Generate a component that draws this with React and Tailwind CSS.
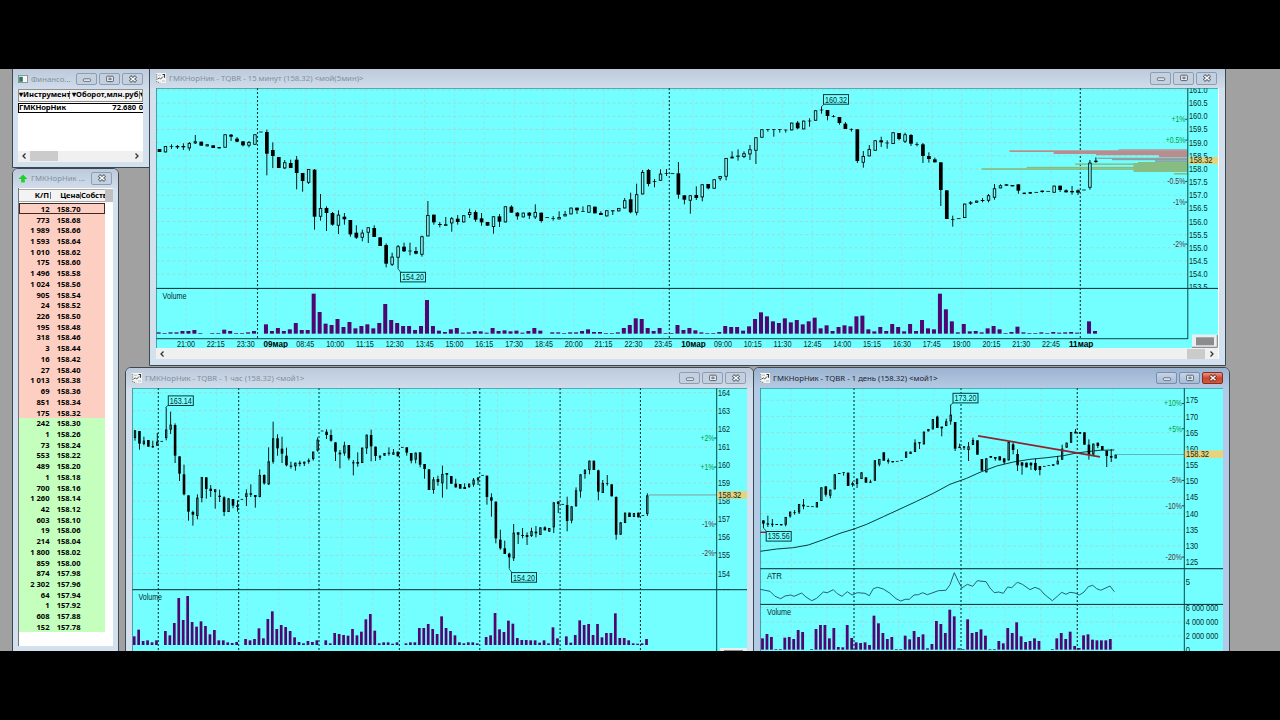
import { Fragment } from 'react';

const ASKS = [
    ['12', '158.70'], ['773', '158.68'], ['1 989', '158.66'], ['1 593', '158.64'], ['1 010', '158.62'],
    ['175', '158.60'], ['1 496', '158.58'], ['1 024', '158.56'], ['905', '158.54'], ['24', '158.52'],
    ['226', '158.50'], ['195', '158.48'], ['318', '158.46'], ['3', '158.44'], ['16', '158.42'],
    ['27', '158.40'], ['1 013', '158.38'], ['69', '158.36'], ['851', '158.34'], ['175', '158.32'],
];
const BIDS = [
    ['242', '158.30'], ['1', '158.26'], ['73', '158.24'], ['553', '158.22'], ['489', '158.20'],
    ['1', '158.18'], ['700', '158.16'], ['1 260', '158.14'], ['42', '158.12'], ['603', '158.10'],
    ['19', '158.06'], ['214', '158.04'], ['1 800', '158.02'], ['859', '158.00'], ['874', '157.98'],
    ['2 302', '157.96'], ['64', '157.94'], ['1', '157.92'], ['608', '157.88'], ['152', '157.78'],
];

// Candles: f = filled, h = hollow, d = flat dash. Numbers are top,bottom[,high,low]
// in thirds of a pixel below the chart's base line.
const M15_CANDLES = `
f249,258 h240,259 f241,243,235,249 f240,244,237,249 f240,244,232,252 h231,247,228,254 h226,232,207,234 f227,239 h235,241 f238,246
h243,247 h205,245 f206,212,204,225 f218,227,213,229 f226,238,226,241 h228,239,225,244 h205,236 d198 f198,263,191,328 f252,270,229,306
f273,306 h289,307,282,309 f291,306,281,306 f281,321,270,370 f321,345,321,377 h309,350,309,354 f311,452,309,491 h426,452,384,464 f426,441,421,495 f441,476,438,479
h446,479,433,504 f452,460,441,476 f462,505,462,512 f500,515,478,519 h500,515,491,526 h484,500,484,531 f486,513,478,513 f514,540 f537,593,532,604 h572,596,560,600
h541,575,537,608 f542,556,530,558 f554,556,530,568 f555,563,543,565 h511,566,509,572 h447,511,405,511 f446,469,446,476 f474,477,468,484 h475,479,453,479 h457,472,453,497
f458,468,447,476 h448,469 h438,447,428,456 f438,461,433,467 f457,469,441,479 f468,479 h451,483,451,503 f451,467,444,483 h421,469 f422,440,418,440
f440,451,438,461 h440,454 f440,449,438,459 h438,454,415,459 f440,465,440,470 d455 f456,458,450,464 h453,460,436,460 h444,451,435,451 h425,445
f425,433,425,444 f435,437,421,438 h418,440 f422,442 f441,447,436,447 h433,451 f433,436,433,447 h426,436 h403,427,396,427 f400,439,380,442
h385,440,353,448 h318,385,312,385 f312,354,309,361 f346,348,339,364 h323,344,310,344 f322,324,309,330 d323 f322,386,288,398 f388,401,388,415 h388,404,388,443
f387,396,361,402 h355,394,355,406 f354,367,354,370 h340,368 h330,338,330,344 h276,332,276,343 h272,277,256,277 f269,272,250,284 h262,273,256,276 h250,265,237,282
h214,254,214,294 h190,215 f189,191,189,197 f189,191,189,212 f189,191,189,200 f191,193,191,200 h170,193 f170,187,165,190 h164,190 f164,166,157,182
h133,164 f131,133,122,143 f132,150,132,163 f150,152,147,154 f153,171,153,176 f173,189,168,189 f189,191,187,197 f190,285,190,291 h270,290,255,305 h249,271,237,271
h223,254 f223,229,212,243 f230,232,223,248 h199,234 f201,219,201,223 h205,227,200,231 f207,233,204,240 f234,236,229,241 f235,270,231,291 f270,279,259,290
f280,289,275,289 f289,372,289,420 f373,459 f459,461,449,482 d458 h413,456 f409,413,405,417 h404,410 f402,405,396,409 h388,404,384,409
h367,395,354,401 h358,367,355,367 f355,359 f357,361 f355,374,355,383 h380,383 h378,383 d379 f374,378,373,380 d376
h359,380 f359,372,359,378 f373,379,370,379 f375,379,360,386 f373,380,370,387 d372 h290,365,282,371 h284,288,274,290`;

const M15_VOLUME = `
799 801 799 799 795 795 792 801 - 801 801 791 795 801 801 799 795 - 775 795 786 795 790 771 792 792 683 738 773 777
759 783 768 787 780 775 787 771 714 762 771 780 780 792 780 702 780 794 798 790 786 800 799 795 796 800 786 795 793 796
794 800 795 786 794 - 799 799 801 799 799 795 790 798 798 801 801 799 786 777 757 759 786 795 786 801 801 777 792 786
793 799 801 801 798 780 783 783 794 781 759 739 751 766 771 757 769 762 775 766 755 787 778 795 783 778 781 751 749 790
796 783 795 774 783 796 774 795 762 787 790 683 730 766 799 774 796 795 799 787 780 790 801 798 782 799 801 801 799 801
798 800 799 798 800 - 766 795`;

const H1_CANDLES = `
h199,222,199,230 f201,239,201,257 h230,240,218,244 f228,248 h246,249,230,251 h233,245,207,245 d232 h197,222,130,229 h182,197,143,210 f183,275,178,297
f277,329,277,351 f331,391,302,394 f394,443,394,470 f444,452,440,485 h401,456,391,466 h339,402,339,415 f340,375,340,404 f374,381,363,399 h376,384,376,434 f395,399,377,414
f400,444,397,456 h403,444 f405,425,405,433 h424,429,409,443 d406 h388,399,376,426 f388,392,361,399 f393,399,393,431 h333,399,316,400 f333,358,331,362
h292,361,250,363 h223,293,173,299 f223,253,211,275 f254,269,218,297 f275,304,251,307 f305,308,293,314 h296,307,296,320 f296,300,290,307 h293,299,293,306 f289,293,283,299
h263,285,263,290 h227,260,220,263 d201 f203,213,196,225 f213,230,197,233 f235,263,235,291 f266,271,258,313 h244,268,233,275 f243,283,243,289 f295,298,288,334
f294,299,265,308 h251,297 h212,253,212,270 f213,247,197,292 f248,276,248,291 h275,281,275,288 h267,275 f266,269,250,275 h265,272,255,272 f263,277
d250 f250,266,250,275 f267,290,267,298 h266,287,266,298 f265,302,265,310 f300,315,300,344 f316,378 h346,378,339,389 f345,354,335,365 h330,358,305,401
f327,332,327,376 f336,359 f359,370,344,371 f360,374 f369,375,358,375 h359,369,359,372 h347,362,342,368 h341,349,339,363 d334 f335,399,335,422
f400,410,388,458 f413,523,413,538 f527,553,497,557 f553,570,530,570 f569,580,566,614 h506,583,480,591 f505,512,505,540 f513,516,492,523 f513,519,505,543 h501,516,491,519
f503,508,486,520 h490,513 f490,499,487,499 h492,503 h415,490,415,507 f413,420,411,447 d421 f423,471,398,502 h427,470,427,478 h379,427,370,427
h331,382,331,401 h317,330,317,344 h290,318,290,331 f290,318 f319,383,317,409 h357,387,348,387 f357,359,333,365 f361,397 f399,512,397,527 h475,512
h446,477 f446,459 h447,459 f446,460 d455 h394,450,388,456`;

const H1_VOLUME = `
817 797 831 829 835 829 - 801 814 777 702 768 696 774 788 772 786 811 798 829 829 835 837 834 - 825 829 825 793 823
765 742 795 783 789 801 820 834 838 831 834 829 - 829 838 807 810 813 815 795 814 803 766 750 800 838 835 835 839 835
- 838 835 835 792 792 780 795 810 757 792 801 814 835 838 835 835 838 - 819 814 747 796 804 770 779 822 828 828 829
829 836 829 838 790 823 - 817 836 813 769 783 780 813 780 820 807 807 748 822 822 829 838 839 838 825`;

const D1_CANDLES = `
f469,479,469,492 f478,482,455,489 h479,482,465,489 f480,483 f480,484 h459,482,459,487 h443,457,443,461 f445,447,438,452 h420,445,420,450 f422,427,405,436
d427 d428 h414,430 h370,411 f367,392,367,398 h377,395,377,403 h331,376 f327,330 f325,327,325,335 f326,366
h357,363,353,368 h344,360,344,372 h325,345 f340,356 f353,356,347,356 h289,350 h285,302,285,307 f265,290 h288,293,283,299 f291,295
d292 d290 h263,281 h263,270 h236,264,226,264 h234,236,234,255 h203,241 h195,202 h165,196 f158,192,155,192
f188,193,188,217 h172,186,164,186 h152,172,122,182 f174,254,174,261 f248,252,239,252 h247,251,247,258 h247,258,234,291 h228,243,221,243 f229,272 f285,320
h283,325 f276,281 f279,284,279,290 f277,289 f283,295,283,300 h234,289 f241,258,236,271 f270,304,256,321 f295,305,295,332 f296,310
f296,304,296,318 f297,318,284,321 f306,318,306,334 d307 d305 f301,305 h290,301,276,301 h254,287,242,287 h236,251 h204,236
f203,208,195,208 h204,209 f205,242 f242,272,226,287 h239,272 f236,246,236,252 f246,258 f260,276,260,309 f276,281,255,294 h272,283`;

const D1_VOLUME = `
823 810 819 855 855 821 819 825 798 804 - 855 795 783 783 823 792 849 850 783 822 835 837 835 843 755 778 807 825 819
855 855 815 826 801 819 811 853 840 771 780 807 737 757 853 855 766 807 804 796 815 855 855 831 838 792 807 775 817 834
831 823 831 - - 855 823 807 825 803 846 852 814 811 827 829 829 829 825`;

const MA_POINTS = '760.3,551.3 776.7,549 793.3,547.7 808.3,545 823.3,539.7 840,533.3 854,529 866.7,524.3 883.3,516.7 900,509 916.7,501.3 933.3,493.3 950,484.3 966.7,478.3 980,472.3 996.7,466 1013.3,462 1030,459.3 1046.7,457.7 1063.3,455.7 1076.7,453 1090,451.3 1100,450.3 1114.3,450';
const ATR_POINTS = '760,589.3 770,591.3 775,596.3 780.7,598.7 785,596 790.7,595 794,596.3 801.7,593 806,597 811.7,600.7 816.7,598.3 823.3,592 827.3,592.7 833.3,589.7 837.3,593.7 842,596.3 847.3,591.7 852,595 857.3,592.7 865,593.3 869.3,595.7 873.3,588.7 877.7,587.3 883.3,589 890,593.3 896,598.7 900.7,601 905.3,599.3 909.3,599.3 914,595 918.3,594.7 922.7,592.7 927.3,594.7 932,593 938.3,590.7 946,590.3 950,584.7 954.3,572.7 958.3,581.3 962,588 967.3,584.3 972.7,586.3 977.3,580.7 986,581.7 990,588 994.3,592.7 998.7,592 1003.3,593.3 1007.7,587 1011.7,587.7 1017.3,582.3 1022.3,584.3 1030,589.7 1035,587.3 1040,589.3 1044,594 1052.3,600.7 1057.3,596.3 1061.7,592.3 1066,594.3 1070,592.3 1075,593 1079.3,595 1084,592 1088.3,586.7 1092.7,585.3 1096.7,588.7 1100.7,590.3 1110,586 1114.3,591.7';

// order book profile: x start, y, height
const RED_DEPTH = [[1118.5, 149.3, 1.2], [1009.5, 150.3, 1.7], [1053.7, 152, 2], [1096, 154, 1.2], [1159, 155, 2.3]];
const GRAY_DEPTH = [[1097.5, 157.7, 1.2], [1112, 159, 1.2], [1155, 160.3, 1.6]];
const GREEN_DEPTH = [[1138, 162, 1.4], [1133.5, 163, 9], [1075, 163.4, 1.5], [1026.7, 166.8, 1.3], [981.7, 168.2, 1.7], [1174, 173, 1.6]];

const range = (n) => Array.from({ length: n }, (_, i) => i);

function Candles({ data, x0, step, base, width, fill = '#73ffff' }) {
    return data.trim().split(/\s+/).map((token, i) => {
        const kind = token[0];
        const [top, bottom = top, high = top, low = bottom] = token.slice(1).split(',').map(Number);
        const x = x0 + i * step;
        const y = (v) => base + v / 3;
        if (kind === 'd') {
            return <rect key={i} x={x - width / 2} y={y(top) - 0.4} width={width} height={0.8} fill="#000" />;
        }
        return (
            <Fragment key={i}>
                <rect x={x - 0.45} y={y(high)} width={0.9} height={(low - high) / 3} fill="#000" />
                {kind === 'h' ? (
                    <rect x={x - width / 2 + 0.6} y={y(top) + 0.4} width={width - 1.2} height={Math.max((bottom - top) / 3 - 0.8, 0.6)}
                        fill={fill} stroke="#000" strokeWidth={0.85} />
                ) : (
                    <rect x={x - width / 2} y={y(top)} width={width} height={(bottom - top) / 3} fill="#000" />
                )}
            </Fragment>
        );
    });
}

function Volume({ data, x0, step, base, floor, width }) {
    return data.trim().split(/\s+/).map((v, i) => v !== '-' && (
        <rect key={i} x={x0 + i * step - width / 2} y={base + v / 3} width={width} height={(floor - v) / 3} fill="#4e0672" />
    ));
}

function Label({ x, y, w, children, color = '#0a2a2a', anchor = 'start', bold }) {
    return (
        <text x={x} y={y + 3} textLength={w} lengthAdjust="spacingAndGlyphs" textAnchor={anchor} fill={color}
            fontSize="8.8" fontWeight={bold ? 700 : 400}>{children}</text>
    );
}

function Tag({ x, y, children }) {
    return (
        <>
            <rect x={x} y={y} width={25} height={9.6} fill="#73ffff" stroke="#063b3b" strokeWidth="1" />
            <Label x={x + 1.5} y={y + 4.9} w={22}>{children}</Label>
        </>
    );
}

function HGrid({ x1, x2, ys }) {
    return ys.map((y) => <line key={y} x1={x1} x2={x2} y1={y} y2={y} stroke="#9fd6d6" strokeWidth="0.9" strokeDasharray="3 2.5" />);
}

function VGrid({ y1, y2, xs }) {
    return xs.map((x) => <line key={x} x1={x} x2={x} y1={y1} y2={y2} stroke="#9be0e0" strokeWidth="0.9" strokeDasharray="3 2.5" />);
}

function DayLines({ y1, y2, xs }) {
    return xs.map((x) => <line key={x} x1={x} x2={x} y1={y1} y2={y2} stroke="#03393b" strokeWidth="1.1" strokeDasharray="2 2" />);
}

function Percents({ x, items }) {
    return items.map(([text, y]) => (
        <Fragment key={text}>
            <Label x={x} y={y} w={text.length * 4.1 + (text.includes('.') ? -1 : 1.5) - (text[0] === '-' ? 1.5 : 0)} anchor="end"
                color={text[0] === '+' ? '#00a040' : '#5b3038'}>{text}</Label>
            <rect x={x} y={y - 0.4} width="2" height="0.9" fill="#063b3b" />
        </Fragment>
    ));
}

const M15_TICKS = ['21:00', '22:15', '23:30', '09мар', '08:45', '10:00', '11:15', '12:30', '13:45', '15:00', '16:15', '17:30', '18:45',
    '20:00', '21:15', '22:30', '23:45', '10мар', '09:00', '10:15', '11:30', '12:45', '14:00', '15:15', '16:30', '17:45', '19:00', '20:15',
    '21:30', '22:45', '11мар'];

function Chart15() {
    return (
        <svg viewBox="156 88 1062 260" className="block h-[260px] w-[1062px] shrink-0 bg-[#73ffff] font-['Liberation_Sans',sans-serif]">
            <svg x="156" y="88" width="1062" height="200.3" viewBox="156 88 1062 200.3">
                <HGrid x1={156} x2={1187} ys={range(15).map((i) => 90 + i * 13.15)} />
                {range(16).map((i) => (
                    <Label key={i} x={1189} y={90 + i * 13.15} w={18.5}>{(161 - i * 0.5).toFixed(1)}</Label>
                ))}
            </svg>
            <VGrid y1={88} y2={338} xs={range(31).map((i) => 186 + i * 29.83)} />
            <DayLines y1={88} y2={338} xs={[257.5, 669.3, 1080.3]} />
            {RED_DEPTH.map(([x, y, h]) => <rect key={y} x={x} y={y} width={1187.5 - x} height={h} fill="#bb8c8e" />)}
            {GRAY_DEPTH.map(([x, y, h]) => <rect key={y} x={x} y={y} width={1187.5 - x} height={h} fill="#8f9c9c" />)}
            {GREEN_DEPTH.map(([x, y, h]) => <rect key={y} x={x} y={y} width={1187.5 - x} height={h} fill="#87bd83" />)}
            <Candles data={M15_CANDLES} x0={159.5} step={5.9643} base={66} width={3.7} />
            <Volume data={M15_VOLUME} x0={158.6} step={5.9643} base={66} floor={803} width={4} />
            <line x1="398" y1="268.7" x2="400.5" y2="272" stroke="#063b3b" strokeWidth="0.8" />
            <Tag x={400.5} y={272.3}>154.20</Tag>
            <line x1="821.3" y1="107" x2="824" y2="104" stroke="#063b3b" strokeWidth="0.8" />
            <Tag x={823.5} y={94.6}>160.32</Tag>
            <Label x={162.5} y={296.2} w={24}>Volume</Label>
            <Percents x={1185.3} items={[['+1%', 119.2], ['+0.5%', 140], ['-0.5%', 181.3], ['-1%', 202], ['-2%', 244]]} />
            <rect x="156" y="287.9" width="1062" height="1" fill="#022c30" />
            <rect x="156" y="338.2" width="1032" height="1" fill="#06484c" />
            <rect x="1187.3" y="88" width="1" height="251" fill="#06484c" />
            <rect x="1188.6" y="157" width="29.4" height="7.2" fill="#e6d37c" />
            <Label x={1189.5} y={160.4} w={23}>158.32</Label>
            {M15_TICKS.map((t, i) => {
                const day = t.includes('мар');
                return <Label key={t + i} x={186 + i * 29.83 + (day ? 0.3 : 0)} y={343.5} w={day ? 24.5 : 18} anchor="middle" bold={day} color={day ? '#000' : undefined}>{t}</Label>;
            })}
            <rect x="1192" y="334.5" width="26" height="13.5" fill="#e9eef0" />
            <path d="M1217.3 335v12.3H1192" fill="none" stroke="#777" />
            <rect x="1196" y="337.3" width="18" height="8" fill="#8c8c8c" />
            <path d="M156.3 348V88.2h1061.7" fill="none" stroke="#35686e" strokeWidth="0.8" />
        </svg>
    );
}

function Chart1h() {
    return (
        <svg viewBox="132 388 615 263" className="block h-[263px] w-[615px] shrink-0 bg-[#73ffff] font-['Liberation_Sans',sans-serif]">
            <svg x="132" y="388" width="615" height="201.7" viewBox="132 388 615 201.7">
                <HGrid x1={132} x2={716} ys={range(11).map((i) => 392.7 + i * 18.08)} />
                {range(12).map((i) => <Label key={i} x={718} y={392.7 + i * 18.08} w={12}>{164 - i}</Label>)}
            </svg>
            <VGrid y1={388} y2={651} xs={range(16).map((i) => 154 + i * 31.23)} />
            <DayLines y1={388} y2={651} xs={range(7).map((i) => 158.3 + i * 80.36)} />
            <rect x="649" y="494.5" width="68" height="0.9" fill="#8b8f91" />
            <Candles data={H1_CANDLES} x0={135} step={4.455} base={364} width={2.6} fill="#4aa9a9" />
            <Volume data={H1_VOLUME} x0={134.2} step={4.455} base={364} floor={843} width={2.7} />
            <line x1="165.5" y1="407.5" x2="168.5" y2="405" stroke="#063b3b" strokeWidth="0.8" />
            <Tag x={168.3} y={395.9}>163.14</Tag>
            <line x1="509.3" y1="569" x2="511.5" y2="572" stroke="#063b3b" strokeWidth="0.8" />
            <Tag x={511.5} y={572.6}>154.20</Tag>
            <Label x={138.5} y={597.3} w={23.5}>Volume</Label>
            <Percents x={714.3} items={[['+2%', 438], ['+1%', 467], ['-1%', 524], ['-2%', 552.8]]} />
            <rect x="132" y="589.2" width="615" height="1" fill="#022c30" />
            <rect x="716.2" y="388" width="1" height="263" fill="#06484c" />
            <rect x="717.3" y="491.2" width="29.7" height="7.6" fill="#e6d37c" />
            <Label x={718.3} y={495} w={23}>158.32</Label>
            <rect x="720" y="648" width="27" height="3" fill="#e9eef0" />
            <rect x="724" y="650" width="19" height="1" fill="#8c8c8c" />
            <path d="M132.3 651V388.2H747" fill="none" stroke="#35686e" strokeWidth="0.8" />
        </svg>
    );
}

function Chart1d() {
    return (
        <svg viewBox="760 388 463 263" className="block h-[263px] w-[463px] shrink-0 bg-[#73ffff] font-['Liberation_Sans',sans-serif]">
            <HGrid x1={760} x2={1184} ys={[...range(11).map((i) => 400.2 + i * 16.2), 582, 607.5, 622, 636]} />
            {range(11).map((i) => <Label key={i} x={1185.8} y={400.4 + i * 16.17} w={12.3}>{175 - i * 5}</Label>)}
            <Label x={1185.8} y={582.3} w={4.3}>5</Label>
            <Label x={1185.8} y={608} w={32.5}>6 000 000</Label>
            <Label x={1185.8} y={622} w={32.5}>4 000 000</Label>
            <Label x={1185.8} y={636.2} w={32.5}>2 000 000</Label>
            <Label x={1185.8} y={650} w={4.3}>0</Label>
            <VGrid y1={388} y2={651} xs={range(10).map((i) => 791.3 + i * 35.67)} />
            <DayLines y1={388} y2={651} xs={[854, 961, 1077.3]} />
            <rect x="1117" y="454" width="67" height="0.8" fill="#54a3ad" />
            <polyline points={MA_POINTS} fill="none" stroke="#053b40" strokeWidth="1" />
            <Candles data={D1_CANDLES} x0={763.4} step={4.459} base={364} width={2.6} fill="#4aa9a9" />
            <line x1="978" y1="435.8" x2="1100" y2="456.8" stroke="#8e2430" strokeWidth="1.7" />
            <line x1="760" y1="532.3" x2="771" y2="532.3" stroke="#b01030" strokeWidth="1.4" />
            <polyline points={ATR_POINTS} fill="none" stroke="#1c4f66" strokeWidth="0.9" />
            <Volume data={D1_VOLUME} x0={762.5} step={4.459} base={364} floor={857} width={2.8} />
            <line x1="950.3" y1="405.5" x2="953.3" y2="402.5" stroke="#063b3b" strokeWidth="0.8" />
            <Tag x={953} y={393.3}>173.20</Tag>
            <line x1="763.5" y1="528" x2="766.5" y2="531.5" stroke="#063b3b" strokeWidth="0.8" />
            <Tag x={766.2} y={531.5}>135.56</Tag>
            <Label x={767} y={576.3} w={15}>ATR</Label>
            <Label x={767} y={612} w={24}>Volume</Label>
            <Percents x={1182} items={[['+10%', 403.4], ['+5%', 428.7], ['-5%', 480.3], ['-10%', 505.8], ['-20%', 557]]} />
            <rect x="760" y="568.2" width="463" height="1" fill="#022c30" />
            <rect x="760" y="603.9" width="463" height="1" fill="#022c30" />
            <rect x="1183.8" y="388" width="1" height="263" fill="#06484c" />
            <rect x="1184.8" y="450.4" width="38.2" height="7.6" fill="#e6d37c" />
            <Label x={1186} y={454.3} w={23}>158.32</Label>
            <path d="M760.3 651V388.2H1223" fill="none" stroke="#35686e" strokeWidth="0.8" />
        </svg>
    );
}

function CaptionButton({ type, active }) {
    const red = active && type === 'close';
    return (
        <div className={`flex h-[12.5px] w-[21px] items-center justify-center rounded-[2px] border ${red ? 'border-[#8a2a20] bg-linear-to-b from-[#e39a88] via-[#c9452c] to-[#cf5c3c]' : active ? 'border-[#7b8ea9] bg-linear-to-b from-[#c4d4e8] to-[#a6bcd8]' : 'border-[#8f9db0] bg-[#c3d0df]'}`}>
            <svg viewBox="0 0 12 8" className="h-2 w-3">
                {type === 'min' && <rect x="2.4" y="3.9" width="7.2" height="2.4" rx="0.6" fill="#fff" stroke="#56606e" strokeWidth="0.9" />}
                {type === 'max' && (
                    <>
                        <rect x="2.7" y="1.2" width="6.6" height="5.4" rx="0.6" fill="#fff" stroke="#56606e" strokeWidth="1" />
                        <rect x="4.9" y="3" width="2.2" height="1.8" fill="#c3d0df" stroke="#56606e" strokeWidth="0.8" />
                    </>
                )}
                {type === 'close' && (
                    <>
                        <path d="M3 1.3 L9 6.7 M9 1.3 L3 6.7" stroke={red ? '#7b2a20' : '#56606e'} strokeWidth="3.2" />
                        <path d="M3.5 1.8 L8.5 6.2 M8.5 1.8 L3.5 6.2" stroke="#fff" strokeWidth="1.5" />
                    </>
                )}
            </svg>
        </div>
    );
}

function ChartIcon() {
    return (
        <svg viewBox="0 0 10 10" className="h-2.5 w-2.5">
            <rect width="10" height="10" fill="#f4f6f5" />
            <path d="M0.7 1v8.3h3.5" fill="none" stroke="#777d7a" strokeDasharray="1.5 0.8" />
            <path d="M1.5 6l2-1 1.2 1L7 3.5" fill="none" stroke="#4d5250" />
            <path d="M6.5 1.5h2v3.2" fill="none" stroke="#333" strokeWidth="1.1" />
            <path d="M2 2.2h3M6 8h3" stroke="#b5bab8" />
        </svg>
    );
}

function TableIcon() {
    return (
        <svg viewBox="0 0 10 8" className="h-2 w-2.5">
            <rect x="0.4" y="0.4" width="9.2" height="7.2" fill="#f5faf8" stroke="#75867f" strokeWidth="0.8" />
            <rect x="1.2" y="1.8" width="3.6" height="5" fill="#28786a" />
        </svg>
    );
}

function UpIcon() {
    return (
        <svg viewBox="0 0 10 9" className="h-[9px] w-2.5">
            <path d="M5 0.5 L9.5 5 H6.8 V8.5 H3.2 V5 H0.5z" fill="#1fd12b" />
        </svg>
    );
}

function Window({ title, icon, place, bar = 'pr-[7px]', buttons = ['min', 'max', 'close'], active, children }) {
    return (
        <div className={`absolute flex flex-col overflow-hidden rounded-t-[6px] border border-[#3d4752] px-[5px] ${active ? 'bg-[#b3cae6]' : 'bg-[#d3e0ed]'} ${place}`}>
            <div className={`-mx-[6px] flex h-[19.5px] shrink-0 items-center pl-1.5 ${bar} ${active ? 'bg-linear-to-b from-[#9cb3d0] to-[#b4cae4]' : 'bg-linear-to-b from-[#bccadb] to-[#d0dcea]'}`}>
                {icon}
                <span className={`mt-[2px] ml-[3px] flex-1 overflow-hidden text-[7.75px] whitespace-nowrap font-['Noto_Sans',sans-serif] ${active ? 'text-[#1d2530]' : 'text-[#83909d]'}`}>{title}</span>
                <div className="flex gap-[2px]">
                    {buttons.map((type) => <CaptionButton key={type} type={type} active={active} />)}
                </div>
            </div>
            {children}
        </div>
    );
}

function Arrow({ dir }) {
    return (
        <svg viewBox="0 0 6 8" className="h-2 w-1.5">
            <path d={dir === 'left' ? 'M4.5 1.5L2 4l2.5 2.5' : 'M1.5 1.5L4 4 1.5 6.5'} fill="none" stroke="#333" strokeWidth="1.3" />
        </svg>
    );
}

function BookRow({ qty, price, tone }) {
    return (
        <div className={`flex h-[10.73px] w-[86px] items-center pt-[2px] leading-none ${tone}`}>
            <span className="w-[30.5px] text-right">{qty}</span>
            <span className="w-[31px] text-right">{price}</span>
        </div>
    );
}

export default function App() {
    return (
        <div className="h-[720px] w-[1280px] overflow-hidden bg-black pt-[69px]">
            <div className="relative h-[582px] overflow-hidden bg-[#a1a1a1]">
                {/* Instruments table */}
                <Window title="Финансо..." icon={<TableIcon />} place="-top-[7px] left-[12px] h-[106px] w-[138px] pt-[6px]">
                    <div className="flex h-[73px] w-[125px] flex-col bg-white font-['Noto_Sans',sans-serif] text-[7.6px] font-bold text-black">
                        <div className="flex h-[13px] items-center overflow-hidden border border-[#8d8d8d] bg-[#f3f3f3] leading-none whitespace-nowrap">
                            <span className="w-[51px] shrink-0 border-r border-[#777]">▾Инструмент</span>
                            <span className="w-[70px] shrink-0 overflow-hidden border-r border-[#777] pl-0.5">▾Оборот,млн.руб.</span>
                            <span>▾</span>
                        </div>
                        <div className="mt-[1.5px] flex h-[10px] items-center overflow-hidden border border-r-0 border-black leading-none">
                            <span className="w-[51px] text-[7.7px] tracking-[-0.15px]">ГМКНорНик</span>
                            <span className="w-[67px] text-right">72.680</span>
                            <span className="pl-[2.5px]">0</span>
                        </div>
                        <div className="mt-auto flex h-[11px] items-center bg-[#f0f0f0] px-[3px]">
                            <Arrow dir="left" />
                            <div className="ml-[3px] h-[10px] w-[28px] bg-[#cbcbcb]" />
                            <div className="ml-auto"><Arrow dir="right" /></div>
                        </div>
                    </div>
                </Window>

                {/* Order book */}
                <Window title="ГМКНорНик ..." icon={<UpIcon />} buttons={['close']} place="top-[98.5px] left-[12px] h-[490px] w-[107px]">
                    <div className="h-[458px] overflow-hidden border-l border-[#777] bg-white font-['Noto_Sans',sans-serif] text-[7.6px] font-bold text-black">
                        <div className="flex h-[15.3px] items-start pt-px whitespace-nowrap">
                            <div className="flex h-[13px] w-[86px] items-center overflow-hidden border-y border-[#aaa] bg-[#f3f3f3] leading-none">
                                <span className="w-[32px] shrink-0 border-r border-[#777] pr-px text-right">К/П</span>
                                <span className="w-[30px] shrink-0 border-r border-[#777] text-right">Цена</span>
                                <span className="tracking-[-0.1px]">Собств</span>
                            </div>
                            <div className="h-[13px] flex-1 bg-[#bfbfbf]" />
                        </div>
                        {ASKS.map(([qty, price], i) => (
                            <BookRow key={price} qty={qty} price={price} tone={i === 0 ? 'bg-[#fccfc2] outline outline-1 -outline-offset-1 outline-[#3b2a26]' : 'bg-[#fccfc2]'} />
                        ))}
                        {BIDS.map(([qty, price]) => <BookRow key={price} qty={qty} price={price} tone="bg-[#c4ffbe]" />)}
                    </div>
                </Window>

                {/* 15 minutes */}
                <Window title="ГМКНорНик - TQBR - 15 минут (158.32) <мой(5мин)>" icon={<ChartIcon />} bar="pr-[9px]" place="-top-[7.5px] left-[149px] h-[304px] w-[1077px] pt-[6px] pl-[6px]">
                    <div className="flex w-[1063px] flex-col border-r border-white">
                        <Chart15 />
                        <div className="flex h-[11px] items-center bg-[#f0f0f0] px-[3px]">
                            <Arrow dir="left" />
                            <div className="mr-[4px] ml-auto h-[10px] w-[18px] bg-[#cbcbcb]" />
                            <Arrow dir="right" />
                        </div>
                    </div>
                </Window>

                {/* 1 hour */}
                <Window title="ГМКНорНик - TQBR - 1 час (158.32) <мой1>" icon={<ChartIcon />} bar="pr-[8px]" place="top-[298px] left-[125px] h-[300px] w-[629px] pl-[6px]">
                    <Chart1h />
                </Window>

                {/* 1 day */}
                <Window title="ГМКНорНик - TQBR - 1 день (158.32) <мой1>" icon={<ChartIcon />} active place="top-[298px] left-[753px] h-[300px] w-[477px] pl-[6px]">
                    <Chart1d />
                </Window>
            </div>
        </div>
    );
}
